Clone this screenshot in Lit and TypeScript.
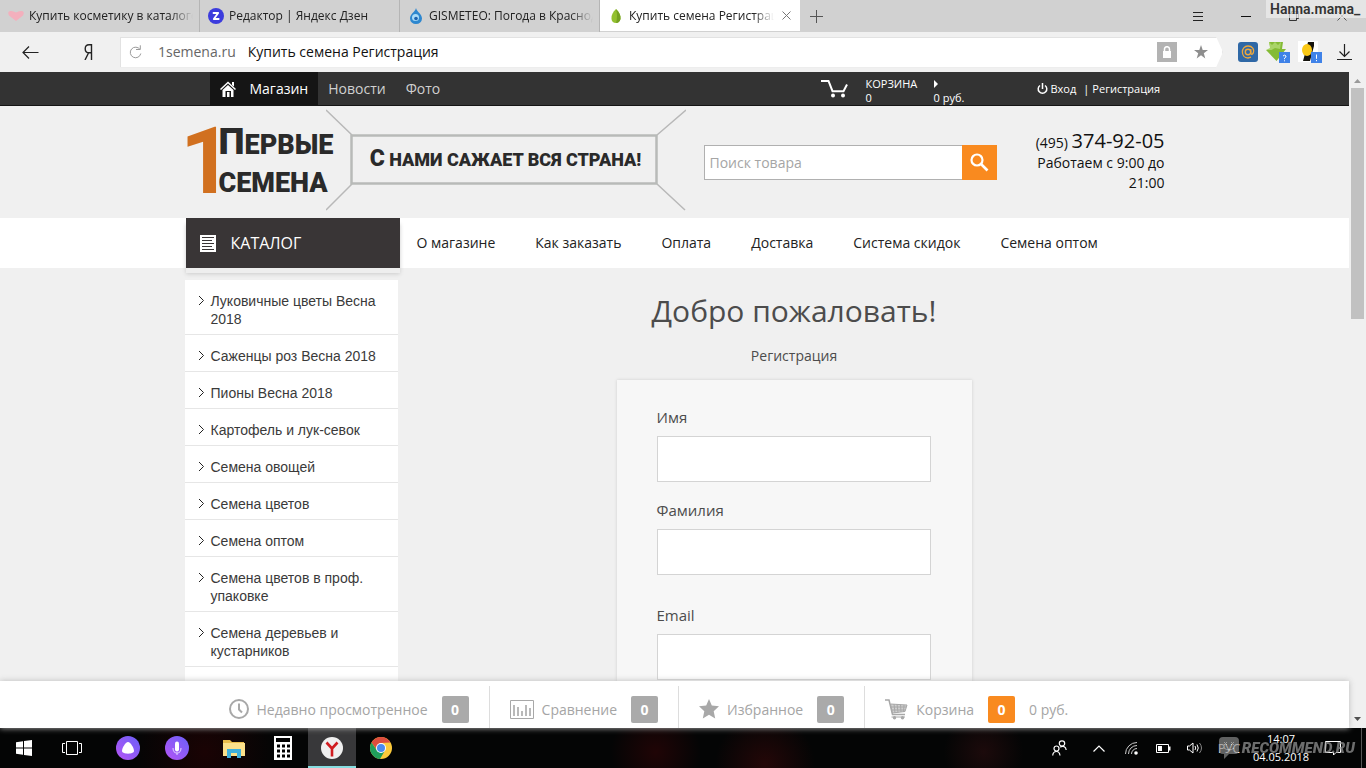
import { LitElement, html, css } from "lit";
import { customElement } from "lit/decorators.js";
import { classMap } from "lit/directives/class-map.js";

const heart = html`<svg width="16" height="16" viewBox="0 0 16 16"><path d="M8 13 L1 7.500 Q-1 4 2 3 Q5 2.500 8 4.500 Q11 2.500 14 3 Q17 4 15 7.500 Z" fill="#f3b0bd"/></svg>`;
const zen = html`<svg width="16" height="16" viewBox="0 0 16 16"><circle cx="8" cy="8" r="8" fill="#3c3cdd"/><path d="M5.500 5 H10.200 L5.800 11 H10.700" fill="none" stroke="#fff" stroke-width="1.800" stroke-linejoin="round" stroke-linecap="round"/></svg>`;
const drop = html`<svg width="16" height="16" viewBox="0 0 16 16"><path d="M8 0 C9 4 14 6 14 10.500 A6 5.500 0 0 1 2 10.500 C2 6 7 4 8 0Z" fill="#2d87cf"/><circle cx="7.500" cy="9.500" r="3.500" fill="#a9dbf8"/><circle cx="8" cy="10.500" r="1.800" fill="#1c62b0"/></svg>`;
const seed = html`<svg width="16" height="16" viewBox="0 0 16 16"><path d="M8 1 C11 4 13 7 12.500 11 Q11.500 15 8 15 Q4 15 3.500 11 C3 7 5 4 8 1Z" fill="#93c02f"/><path d="M8 1 C11 4 13 7 12.500 11 Q11.500 15 8 15 Q10 8 8 1Z" fill="#75a122"/></svg>`;

const TABS = [
  { icon: heart, title: "Купить косметику в каталоге", active: false },
  { icon: zen, title: "Редактор | Яндекс Дзен", active: false },
  { icon: drop, title: "GISMETEO: Погода в Краснодаре", active: false },
  { icon: seed, title: "Купить семена Регистрация", active: true },
];

@customElement("browser-chrome")
class BrowserChrome extends LitElement {
  static styles = css`
    :host { display: block; font-family: "Open Sans", "Noto Sans", sans-serif; color: #222; }
    button { border: 0; background: none; padding: 0; display: grid; place-items: center; color: inherit; font: inherit; }
    svg { display: block; flex: none; }
    .tabs { display: flex; height: 32px; background: #d1d1d1; }
    .tab { display: flex; align-items: center; gap: 5px; width: 200px; height: 32px; padding: 0 6px 0 8px; box-sizing: border-box; border-right: 1px solid #b5b5b5; font-size: 12px; }
    .tab.active { background: #fff; border-right-color: #fff; height: 31px; }
    .title { flex: 1; min-width: 0; overflow: hidden; white-space: nowrap; line-height: 20px; -webkit-mask-image: linear-gradient(to right, #000 86%, transparent); mask-image: linear-gradient(to right, #000 86%, transparent); }
    .close { width: 14px; height: 20px; }
    .plus { width: 32px; }
    .spring { flex: 1; }
    .win { width: 48px; }
    .bar { display: flex; align-items: center; height: 40px; background: #f0f0f0; }
    .nav { width: 60px; height: 40px; }
    .ya { width: 56px; height: 40px; }
    .address { flex: 1; display: flex; align-items: center; height: 31px; margin-left: 4px; padding: 0 13px 0 7px; background: #fff; border: 1px solid #e2e2e2; box-sizing: border-box; clip-path: polygon(0 0, calc(100% - 7px) 0, 100% 50%, calc(100% - 7px) 100%, 0 100%); font-size: 14px; line-height: 20px; white-space: nowrap; }
    .host { color: #666; margin-left: 15px; }
    .page { color: #111; margin-left: 12px; flex: 1; }
    .lock { width: 20px; height: 20px; background: #b3b3b3; }
    .star { margin-left: 16px; width: 16px; }
    .ext { display: flex; gap: 8px; margin-left: 15px; align-items: center; }
    .load { width: 44px; height: 40px; }
  `;
  render() {
    return html`
      <div class="tabs">
        ${TABS.map((t) => html`
          <div class=${classMap({ tab: true, active: t.active })}>
            ${t.icon}<span class="title">${t.title}</span>
            ${t.active ? html`<button class="close" aria-label="Закрыть вкладку"><svg width="9" height="9" viewBox="0 0 9 9"><path d="M.500 .500 L8.500 8.500 M8.500 .500 L.500 8.500" stroke="#777"/></svg></button>` : ""}
          </div>`)}
        <button class="plus" aria-label="Новая вкладка"><svg width="13" height="13" viewBox="0 0 13 13"><path d="M6.500 0 V13 M0 6.500 H13" stroke="#555"/></svg></button>
        <span class="spring"></span>
        <button class="win" aria-label="Меню"><svg width="10" height="9" viewBox="0 0 10 9"><path d="M0 .500 H10 M0 4.500 H10 M0 8.500 H10" stroke="#222"/></svg></button>
        <button class="win" aria-label="Свернуть"><svg width="10" height="9" viewBox="0 0 10 9"><path d="M0 4.500 H10" stroke="#111"/></svg></button>
        <button class="win" aria-label="Развернуть"><svg width="10" height="10" viewBox="0 0 10 10"><path d="M.500 2.500 H7.500 V9.500 H.500Z M2.500 2.500 V.500 H9.500 V7.500 H7.500" fill="none" stroke="#333"/></svg></button>
        <button class="win" aria-label="Закрыть"><svg width="10" height="10" viewBox="0 0 10 10"><path d="M.500 .500 L9.500 9.500 M9.500 .500 L.500 9.500" stroke="#555"/></svg></button>
      </div>
      <div class="bar">
        <button class="nav" aria-label="Назад"><svg width="17" height="13" viewBox="0 0 17 13"><path d="M16.500 6.500 H1 M7 .500 L1 6.500 L7 12.500" fill="none" stroke="#222" stroke-width="1.200"/></svg></button>
        <button class="ya" aria-label="Яндекс"><svg width="9" height="16" viewBox="0 0 9 16"><path d="M7.500 16 V.700 H5 Q1.200 .700 1.200 4.700 Q1.200 8.800 5 8.800 H7.500 M4.500 9 L1 16" fill="none" stroke="#222" stroke-width="1.400"/></svg></button>
        <div class="address">
          <button aria-label="Обновить"><svg width="15" height="15" viewBox="0 0 15 15"><path d="M12 4.500 A5.300 5.300 0 1 0 12.800 8.500 M8 4.500 H12.300 V.300" fill="none" stroke="#9a9a9a"/></svg></button>
          <span class="host">1semena.ru</span><span class="page">Купить семена Регистрация</span>
          <button class="lock" aria-label="Защищено"><svg width="10" height="12" viewBox="0 0 10 12"><path d="M1 5 H9 V12 H1Z" fill="#fff"/><path d="M2.500 5.500 V3 A2.500 2.300 0 0 1 7.500 3 V5.500" fill="none" stroke="#fff" stroke-width="1.500"/></svg></button>
          <button class="star" aria-label="В закладки"><svg width="14" height="14" viewBox="0 0 14 14"><path d="M7 0 L8.700 5 H14 L9.800 8.200 L11.300 13.400 L7 10.300 L2.700 13.400 L4.200 8.200 L0 5 H5.300Z" fill="#8e8e8e"/></svg></button>
        </div>
        <div class="ext">
          <button aria-label="Почта"><svg width="20" height="20" viewBox="0 0 20 20"><rect width="20" height="20" rx="3" fill="#2f68a6"/><circle cx="10" cy="10" r="2.700" fill="none" stroke="#f0a83a" stroke-width="1.400"/><path d="M12.800 7 V11.500 Q13.500 13 15 11.500 C17 7 14 4 10 4 C2.500 4 2.500 16 10 16 L13 15.200" fill="none" stroke="#f0a83a" stroke-width="1.300"/></svg></button>
          <button aria-label="Загрузчик"><svg width="24" height="22" viewBox="0 0 24 22"><path d="M3 1 H17 L16 8 H20 L10.500 20 L0 9 H5Z" fill="#84bb35"/><path d="M3 1 L6 4 L9 1 L12 4 L15 1 L14 8 L9 7 L5.500 9 H0 L4 7Z" fill="#a9d468"/><rect x="13" y="11" width="11" height="11" fill="#3f82e8"/><path d="M17 15 Q18.500 13.300 20 15 Q20.300 16.300 18.500 17.200 V18.200 M18.500 19.300 V20.300" fill="none" stroke="#fff"/></svg></button>
          <button aria-label="Сканер"><svg width="24" height="22" viewBox="0 0 24 22"><rect width="20" height="21" fill="#fff"/><path d="M10 1 H16 V5 L12 20 H5 L8 9Z" fill="#15130d"/><ellipse cx="9" cy="9" rx="5" ry="6" fill="#fac816"/><rect x="13" y="11" width="11" height="11" fill="#3f82e8"/><path d="M18.500 13.500 V17.800 M18.500 19 V20.200" stroke="#fff"/></svg></button>
        </div>
        <button class="load" aria-label="Загрузки"><svg width="15" height="16" viewBox="0 0 15 16"><path d="M7.500 0 V12.500 M2.500 7.500 L7.500 12.500 L12.500 7.500 M0 15.500 H15" fill="none" stroke="#222" stroke-width="1.200"/></svg></button>
      </div>`;
  }
}

const CATEGORIES = ["Луковичные цветы Весна 2018", "Саженцы роз Весна 2018", "Пионы Весна 2018", "Картофель и лук-севок", "Семена овощей", "Семена цветов", "Семена оптом", "Семена цветов в проф. упаковке", "Семена деревьев и кустарников"];
const MENU = ["О магазине", "Как заказать", "Оплата", "Доставка", "Система скидок", "Семена оптом"];

const clock = html`<svg width="20" height="20" viewBox="0 0 20 20"><circle cx="10" cy="10" r="9" fill="none" stroke="#a8a8a8" stroke-width="2"/><path d="M10 4.500 V10.500 L13 13.500" fill="none" stroke="#a8a8a8" stroke-width="2"/></svg>`;
const chart = html`<svg width="24" height="19" viewBox="0 0 24 19"><path d="M.500 .500 H23.500 V18.500 H.500Z" fill="none" stroke="#a8a8a8"/><path d="M4 16 V5 M8 16 V7 M12 16 V11 M16 16 V5 M20 16 V8" stroke="#a8a8a8" stroke-width="1.600"/></svg>`;
const star = html`<svg width="20" height="20" viewBox="0 0 20 20"><path d="M10 0 L12.800 6.500 L20 7.300 L14.700 12.200 L16.200 19.500 L10 15.800 L3.800 19.500 L5.300 12.200 L0 7.300 L7.200 6.500Z" fill="#a8a8a8"/></svg>`;
const trolley = html`<svg width="23" height="21" viewBox="0 0 23 21"><path d="M0 1 H4 L7.500 15.500 H20" fill="none" stroke="#a8a8a8" stroke-width="1.500"/><path d="M5.500 5 L22 6 L20 12.500 L7.500 14Z" fill="#cfcfcf" stroke="#a8a8a8"/><path d="M9 5 L10 14 M12 5 L13 13.500 M15.500 5.500 L16 13 M19 6 L18.500 13 M6 8 H21 M7 11 H20" stroke="#a8a8a8"/><path d="M6.500 18 H20" stroke="#a8a8a8"/><circle cx="9.500" cy="18.800" r="1.700" fill="#a8a8a8"/><circle cx="17.500" cy="18.800" r="1.700" fill="#a8a8a8"/></svg>`;

@customElement("shop-page")
class ShopPage extends LitElement {
  static styles = css`
    :host { display: flex; flex: 1; min-height: 0; background: #f0f0f0; font-family: "Open Sans", "Noto Sans", sans-serif; color: #222; }
    a { color: inherit; text-decoration: none; }
    button { border: 0; padding: 0; font: inherit; color: inherit; background: none; }
    svg { display: block; flex: none; }
    .view { flex: 1; min-width: 0; display: flex; flex-direction: column; }
    .wrap { width: 100%; max-width: 980px; margin: 0 auto; box-sizing: border-box; display: flex; }
    .top { background: #333; border-bottom: 1px solid #151515; color: #fff; flex: none; }
    .top .wrap { height: 33px; padding: 0 5px 0 25px; }
    .links { display: flex; flex: 1; font-size: 14px; line-height: 33px; color: #d0d0d0; }
    .links a { padding: 0 10px; }
    .links .on { display: flex; align-items: center; gap: 14px; background: #151515; color: #fff; }
    .cart { width: 216px; display: flex; align-items: center; font-size: 11px; line-height: 14px; }
    .sum { display: grid; grid-template-columns: 68px auto; margin-left: 18px; padding-top: 4px; align-items: center; }
    .login { width: 123px; display: flex; align-items: center; gap: 3px; font-size: 11px; white-space: nowrap; font-weight: 500; }
    .bar { margin-left: 4px; }
    .head { flex: none; }
    .head .wrap { height: 112px; padding-left: 10px; align-items: center; }
    .logo { width: 131px; display: flex; align-items: center; font-family: Roboto, sans-serif; font-weight: 900; color: #2a2a2a; white-space: nowrap; }
    .one { color: #d1701f; font-weight: 700; font-size: 92px; line-height: 76px; width: 24px; display: flex; justify-content: center; }
    .name { font-size: 27px; line-height: 38px; text-transform: uppercase; }
    .big { font-size: 37px; line-height: 38px; }
    .banner { display: grid; width: 360px; flex: none; padding-bottom: 4px; }
    .banner > * { grid-area: 1 / 1; }
    .slogan { place-self: center; padding-bottom: 2px; font-family: Roboto, sans-serif; font-weight: 900; font-size: 18px; line-height: 26px; text-transform: uppercase; color: #2a2a2a; white-space: nowrap; }
    .lead { font-size: 23px; line-height: 26px; }
    .search { display: flex; margin-left: 18px; width: 293px; height: 35px; }
    .search input { flex: 1; min-width: 0; border: 1px solid #b0b0b0; border-right: 0; background: #fff; padding: 0 5px; font: inherit; font-size: 14px; border-radius: 0; }
    .search input::placeholder { color: #a5a5a5; opacity: 1; }
    .search button { width: 35px; background: #f98a1f; display: grid; place-items: center; }
    .phone { flex: 1; text-align: right; font-size: 14px; line-height: 20px; padding-left: 24px; color: #111; }
    .num { font-size: 20px; }
    .menu { background: #fff; flex: none; }
    .menu .wrap { height: 50px; align-items: center; padding-left: 1px; }
    .catalog { width: 214px; height: 50px; background: #393536; color: #fff; font-size: 16px; box-shadow: 0 5px 0 #eee, 0 6px 4px #ccc; }
    .catalog button { width: 100%; height: 100%; display: flex; align-items: center; gap: 15px; padding-left: 14px; }
    .menu nav { display: flex; gap: 40px; margin-left: 17px; padding-bottom: 2px; font-size: 14px; white-space: nowrap; }
    .body { flex: 1; min-height: 0; overflow: hidden; padding-top: 12px; }
    .side { width: 213px; box-sizing: border-box; margin: 0; padding: 0; list-style: none; background: #fff; flex: none; font-family: "Liberation Sans", sans-serif; font-size: 14px; line-height: 18px; color: #3a3a3a; }
    .side li { border-bottom: 1px solid #e6e6e6; }
    .side a { display: flex; gap: 6px; padding: 12px 16px 6px 13px; }
    .side svg { margin-top: 3px; }
    main { flex: 1; margin-left: 26px; display: flex; flex-direction: column; align-items: center; color: #4c4c4c; }
    h1 { margin: 10px 0 0; font-size: 30px; line-height: 42px; font-weight: 400; }
    .sub { margin: 12px 0 0; font-size: 14px; line-height: 24px; }
    .card { width: 355px; box-sizing: border-box; margin-top: 12px; padding: 28px 41px 28px 40px; background: #f7f7f7; box-shadow: 0 0 3px #ccc; display: flex; flex-direction: column; gap: 19px; }
    .field { display: grid; gap: 10px; font-size: 15px; line-height: 18px; }
    .field input { height: 46px; width: 100%; box-sizing: border-box; border: 1px solid #d4d4d4; background: #fff; border-radius: 0; }
    .mail { margin-top: 12px; }
    .foot { flex: none; background: #fff; box-shadow: 0 0 6px #bbb; position: relative; }
    .foot .wrap { height: 47px; padding: 5px 0 0 24px; }
    .cell { display: flex; align-items: center; gap: 8px; padding: 4px 20px 0; color: #a5a5a5; font-size: 14px; border-left: 1px solid #ddd; white-space: nowrap; }
    .cell:first-child { border: 0; }
    .count { width: 27px; height: 27px; margin-left: 6px; border-radius: 2px; background: #aaa; color: #fff; font-weight: 700; font-size: 14px; line-height: 27px; text-align: center; }
    .hot { background: #f98a1f; margin-right: 6px; }
    .scroll { width: 17px; display: flex; flex-direction: column; align-items: center; background: #f0f0f0; padding: 7px 0; box-sizing: border-box; }
    .thumb { width: 13px; height: 36%; background: #c1c1c1; margin: 5px 0 auto; }
  `;
  cell(icon: unknown, name: string, sum = "") {
    return html`<a class="cell" href="#">${icon}<span>${name}</span><span class=${classMap({ count: true, hot: !!sum })}>0</span>${sum ? html`<span>${sum}</span>` : ""}</a>`;
  }
  render() {
    return html`
      <div class="view">
        <div class="top"><div class="wrap">
          <nav class="links">
            <a class="on" href="#"><svg width="16" height="16" viewBox="0 0 16 16"><path d="M.500 8.500 L8 1.500 L15.500 8.500" fill="none" stroke="#fff" stroke-width="1.500"/><path d="M12 1 H14 V5.500 L12 4Z M2.500 9 L8 4 L13.500 9 V16 H11 V10 H5.500 V16 H2.500Z" fill="#fff"/><path d="M7 11 H9.500 V16 H7Z" fill="#fff"/></svg>Магазин</a>
            <a href="#">Новости</a><a href="#">Фото</a>
          </nav>
          <a class="cart" href="#">
            <svg width="27" height="18" viewBox="0 0 27 18"><path d="M0 1 H7.500 L11.500 11.200 H22.500 L26 4.500" fill="none" stroke="#fff" stroke-width="2"/><circle cx="12" cy="15.500" r="2" fill="#fff"/><circle cx="22" cy="15.500" r="2" fill="#fff"/></svg>
            <span class="sum"><span>КОРЗИНА</span><svg width="4" height="8" viewBox="0 0 4 8"><path d="M0 0 L4 4 L0 8Z" fill="#fff"/></svg><span>0</span><span>0 руб.</span></span>
          </a>
          <div class="login">
            <svg width="11" height="12" viewBox="0 0 11 12"><path d="M3 2.500 A4.300 4.300 0 1 0 8 2.500 M5.500 0 V6" fill="none" stroke="#fff" stroke-width="1.500"/></svg>
            <a href="#">Вход</a><span class="bar">|</span><a href="#">Регистрация</a>
          </div>
        </div></div>
        <header class="head"><div class="wrap">
          <a class="logo" href="#"><span class="one">1</span><span class="name"><span class="big">П</span>ервые<br>семена</span></a>
          <div class="banner">
            <svg width="360" height="102" viewBox="0 0 360 102"><path d="M0 1 L26 26 M360 1 L331 26 M0 101 L26 75 M359 101 L331 75" stroke="#b8b8b8" stroke-width="1.500"/><rect x="25.500" y="26.500" width="305" height="48" fill="none" stroke="#b8bab8" stroke-width="2.500"/></svg>
            <span class="slogan"><span class="lead">С</span> нами сажает вся страна!</span>
          </div>
          <form class="search" role="search">
            <input type="search" placeholder="Поиск товара" aria-label="Поиск товара">
            <button type="button" aria-label="Найти"><svg width="19" height="19" viewBox="0 0 19 19"><circle cx="7" cy="7" r="5.500" fill="none" stroke="#fff" stroke-width="2.200"/><path d="M11 11 L17.500 17.500" stroke="#fff" stroke-width="2.600"/></svg></button>
          </form>
          <div class="phone">(495) <span class="num">374-92-05</span><br>Работаем с 9:00 до 21:00</div>
        </div></header>
        <div class="menu"><div class="wrap">
          <div class="catalog"><button><svg width="16" height="17" viewBox="0 0 16 17"><rect width="16" height="17" fill="#fff"/><path d="M2 2.500 H14 M2 5.500 H12 M2 8.500 H14 M2 11.500 H12 M2 14.500 H14" stroke="#393536"/></svg>КАТАЛОГ</button></div>
          <nav>${MENU.map((m) => html`<a href="#">${m}</a>`)}</nav>
        </div></div>
        <div class="body"><div class="wrap">
          <ul class="side">
            ${CATEGORIES.map((c) => html`<li><a href="#"><svg width="7" height="11" viewBox="0 0 7 11"><path d="M1 1 L5.500 5.500 L1 10" fill="none" stroke="#222"/></svg><span>${c}</span></a></li>`)}
            <li><a href="#" aria-label="Ещё">&nbsp;</a></li>
          </ul>
          <main>
            <h1>Добро пожаловать!</h1>
            <p class="sub">Регистрация</p>
            <form class="card">
              <label class="field">Имя<input type="text"></label>
              <label class="field">Фамилия<input type="text"></label>
              <label class="field mail">Email<input type="email"></label>
            </form>
          </main>
        </div></div>
        <div class="foot"><div class="wrap">
          ${this.cell(clock, "Недавно просмотренное")}
          ${this.cell(chart, "Сравнение")}
          ${this.cell(star, "Избранное")}
          ${this.cell(trolley, "Корзина", "0 руб.")}
        </div></div>
      </div>
      <div class="scroll">
        <svg width="7" height="4" viewBox="0 0 7 4"><path d="M0 4 L3.500 0 L7 4Z" fill="#9a9a9a"/></svg>
        <div class="thumb"></div>
        <svg width="7" height="4" viewBox="0 0 7 4"><path d="M0 0 L3.500 4 L7 0Z" fill="#505050"/></svg>
      </div>`;
  }
}

const APPS = [
  { name: "Алиса", on: false, icon: html`<svg width="24" height="24" viewBox="0 0 24 24"><defs><linearGradient id="al" x1="0" y1="1" x2="1" y2="0"><stop offset="0" stop-color="#b655f5"/><stop offset="1" stop-color="#6a60f8"/></linearGradient></defs><circle cx="12" cy="12" r="12" fill="url(#al)"/><path d="M12 6 C14.500 6 18 12 18 15 C18 18.500 6 18.500 6 15 C6 12 9.500 6 12 6Z" fill="#fff"/></svg>` },
  { name: "Голос", on: false, icon: html`<svg width="24" height="24" viewBox="0 0 24 24"><defs><linearGradient id="mi" x1="0" y1="1" x2="1" y2="0"><stop offset="0" stop-color="#b655f5"/><stop offset="1" stop-color="#6a60f8"/></linearGradient></defs><circle cx="12" cy="12" r="12" fill="url(#mi)"/><rect x="10" y="5.500" width="4" height="10" rx="2" fill="#fff"/><path d="M8 12 Q8 17 12 17 Q16 17 16 12 M12 17 V19" fill="none" stroke="#e6d5ff"/></svg>` },
  { name: "Проводник", on: false, gap: true, icon: html`<svg width="22" height="19" viewBox="0 0 22 19"><path d="M0 1 H7 L9 3 H21 V17 H0Z" fill="#e9bd4c"/><path d="M0 4 H22 V17 H0Z" fill="#fbe08a"/><path d="M4 10 H18 V19 H14 V14 H8 V19 H4Z" fill="#3fb0dc"/></svg>` },
  { name: "Калькулятор", on: false, icon: html`<svg width="18" height="24" viewBox="0 0 18 24"><rect width="18" height="24" fill="#fff"/><path d="M2 2 H16 V6 H2Z" fill="#000"/><path d="M3 10 H16 M3 15 H16 M3 20 H16" stroke="#000" stroke-width="3" stroke-dasharray="3 2"/></svg>` },
  { name: "Яндекс.Браузер", on: true, icon: html`<svg width="22" height="22" viewBox="0 0 22 22"><circle cx="11" cy="11" r="11" fill="#efefef"/><path d="M5.500 5.500 L11 11.500 L16.500 5.500 M11 11 V19.500" fill="none" stroke="#d01c20" stroke-width="2.600"/></svg>` },
  { name: "Chrome", on: false, icon: html`<svg width="22" height="22" viewBox="0 0 22 22"><circle cx="11" cy="11" r="11" fill="#fbca3b"/><path d="M1.500 5.500 A11 11 0 0 1 20.500 5.500 L11 6 L7 13Z" fill="#dd4d3e"/><path d="M1.500 5.500 A11 11 0 0 0 10 22 L15 13.500 L7 13.500Z" fill="#1f9e5b"/><circle cx="11" cy="11" r="5" fill="#fff"/><circle cx="11" cy="11" r="4" fill="#4a8bf0"/></svg>` },
];

@customElement("task-bar")
class TaskBar extends LitElement {
  static styles = css`
    :host { display: flex; height: 40px; flex: none; color: #fff; font-family: "Open Sans", "Noto Sans", sans-serif; background: radial-gradient(circle at 48% 60%, #200506, transparent 45px), radial-gradient(circle at 56% 90%, #240708, transparent 50px), radial-gradient(circle at 15% 60%, #1a0304, transparent 70px), radial-gradient(circle at 72% 60%, #1c0a0b, transparent 40px), #040505; }
    button { border: 0; padding: 0; background: none; color: inherit; font: inherit; display: grid; place-items: center; width: 48px; height: 40px; box-sizing: border-box; }
    svg { display: block; }
    .apps { display: flex; gap: 1px; margin-left: 8px; flex: 1; }
    .apps .gap { margin-left: 8px; }
    .apps .on { background: #38383a; border-bottom: 2px solid #86dde0; padding-top: 2px; }
    .tray { display: flex; }
    .tray button { width: 32px; }
    .tray .people { width: 48px; }
    .tray .lang { width: 36px; font-size: 12px; }
    .tray .time { width: 68px; font-size: 11px; line-height: 18px; text-align: center; }
    .tray .note { width: 35px; }
    .tray .edge { width: 12px; border-right: 1px solid #555; margin-right: 4px; }
  `;
  render() {
    return html`
      <button aria-label="Пуск"><svg width="16" height="16" viewBox="0 0 16 16"><path d="M0 2.300 L7 1.300 V7.500 H0Z M8 1.100 L16 0 V7.500 H8Z M0 8.500 H7 V14.700 L0 13.700Z M8 8.500 H16 V16 L8 14.900Z" fill="#fff"/></svg></button>
      <button aria-label="Представление задач"><svg width="20" height="14" viewBox="0 0 20 14"><path d="M4.500 .500 H15.500 V13.500 H4.500Z M3 2.500 H.500 V11.500 H3 M17 2.500 H19.500 V11.500 H17" fill="none" stroke="#fff"/></svg></button>
      <div class="apps">${APPS.map((a) => html`<button class=${classMap({ on: a.on, gap: !!a.gap })} aria-label=${a.name}>${a.icon}</button>`)}</div>
      <div class="tray">
        <button class="people" aria-label="Люди"><svg width="15" height="16" viewBox="0 0 15 16"><g fill="none" stroke="#fff" stroke-width="1.200"><circle cx="10" cy="3.500" r="2.700"/><circle cx="4.500" cy="8.500" r="2.500"/><path d="M.700 15.500 Q1 11.500 4.500 11.500 Q7.500 11.500 8 15.500 M8 7 Q13.500 5 14.200 10"/></g></svg></button>
        <button aria-label="Скрытые значки"><svg width="12" height="7" viewBox="0 0 12 7"><path d="M.500 6.500 L6 1 L11.500 6.500" fill="none" stroke="#fff" stroke-width="1.200"/></svg></button>
        <button aria-label="Сеть"><svg width="13" height="13" viewBox="0 0 13 13"><g fill="none" stroke="#ccc"><path d="M.500 12 A11.500 11.500 0 0 1 12 .500 M3.500 12 A8.500 8.500 0 0 1 12 3.500 M6.500 12 A5.500 5.500 0 0 1 12 6.500"/></g><circle cx="11" cy="11" r="1.800" fill="#fff"/></svg></button>
        <button aria-label="Батарея"><svg width="15" height="9" viewBox="0 0 15 9"><path d="M.500 .500 H12.500 V8.500 H.500Z" fill="none" stroke="#fff"/><path d="M2 2 H6 V7 H2Z M13 2.500 H14.500 V6.500 H13Z" fill="#fff"/></svg></button>
        <button aria-label="Громкость"><svg width="16" height="12" viewBox="0 0 16 12"><g fill="none" stroke="#fff"><path d="M.500 4 H2.500 L6 1 V11 L2.500 8 H.500Z M8 4 Q9.500 6 8 8 M10 2.500 Q12.500 6 10 9.500"/><path d="M12.500 1 Q16.500 6 12.500 11" stroke="#888"/></g></svg></button>
        <button class="lang">РУС</button>
        <button class="time"><span>14:07<br>04.05.2018</span></button>
        <button class="note" aria-label="Уведомления"><svg width="16" height="15" viewBox="0 0 16 15"><path d="M.500 .500 H15.500 V11.500 H11 L8.500 14 V11.500 H.500Z" fill="none" stroke="#fff"/></svg></button>
        <button class="edge" aria-label="Рабочий стол"></button>
      </div>`;
  }
}

@customElement("app-root")
class AppRoot extends LitElement {
  static styles = css`
    :host { display: flex; flex-direction: column; height: 100vh; overflow: hidden; position: relative; }
    .owner { position: absolute; top: 0; right: 0; width: 100px; height: 18px; box-sizing: border-box; padding-left: 4px; background: rgba(235, 235, 235, 0.75); font: 600 14px/19px Roboto, sans-serif; color: #333; white-space: nowrap; }
    .mark { position: absolute; right: 11px; bottom: 9px; display: flex; align-items: center; gap: 3px; color: #999; opacity: 0.7; font: italic 900 15px/20px Roboto, sans-serif; pointer-events: none; }
  `;
  render() {
    return html`<browser-chrome></browser-chrome><shop-page></shop-page><task-bar></task-bar>
      <div class="owner">Hanna.mama_</div>
      <div class="mark"><svg width="20" height="22" viewBox="0 0 20 22"><path d="M4 0 H16 Q20 0 20 4 V13 Q20 17 16 17 H10 L5 22 V17 H4 Q0 17 0 13 V4 Q0 0 4 0Z" fill="#888"/><path d="M5 5 L8 8 M8 5 L5 8 M12 5 L15 8 M15 5 L12 8 M5 11 Q10 15 15 11" stroke="#ddd" fill="none"/></svg>RECOMMEND.RU</div>`;
  }
}
